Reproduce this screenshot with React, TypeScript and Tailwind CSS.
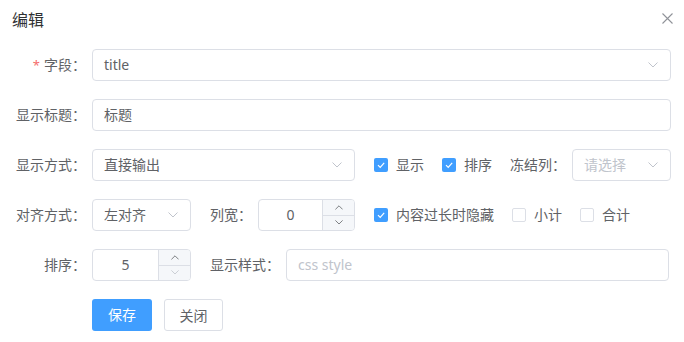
import React from 'react';

const Chevron: React.FC<{ up?: boolean; color?: string; w?: number }> = ({ up, color = '#c0c4cc', w = 10 }) => (
  <svg width={w} height={w * 0.6} viewBox="0 0 10 6" fill="none">
    <path d={up ? 'M0.5 5.5 L5 1 L9.5 5.5' : 'M0.5 0.5 L5 5 L9.5 0.5'} stroke={color} strokeWidth="1" />
  </svg>
);

const Checkbox: React.FC<{ checked?: boolean; label: string; className?: string }> = ({ checked, label, className = '' }) => (
  <div className={`flex items-center shrink-0 whitespace-nowrap ${className}`}>
    {checked ? (
      <span className="w-[14px] h-[14px] rounded-[2px] bg-[#409eff] flex items-center justify-center">
        <svg width="14" height="14" viewBox="0 0 14 14" fill="none">
          <path d="M4 7.2 L6.2 9.4 L10.2 4.8" stroke="#fff" strokeWidth="1.2" />
        </svg>
      </span>
    ) : (
      <span className="w-[14px] h-[14px] rounded-[2px] border border-[#dcdfe6] bg-white" />
    )}
    <span className="ml-2 text-[14px] text-[#606266]">{label}</span>
  </div>
);

const Select: React.FC<{ value?: string; placeholder?: string; className?: string }> = ({ value, placeholder, className = '' }) => (
  <div className={`h-8 shrink-0 border border-[#dcdfe6] rounded-[4px] flex items-center justify-between pl-[11px] pr-[12px] ${className}`}>
    <span className={`text-[14px] whitespace-nowrap ${value ? 'text-[#606266]' : 'text-[#c0c4cc]'}`}>{value || placeholder}</span>
    <Chevron />
  </div>
);

const InputNumber: React.FC<{ value: string; className?: string; downDisabled?: boolean }> = ({ value, className = '', downDisabled }) => (
  <div className={`h-8 shrink-0 border border-[#dcdfe6] rounded-[4px] flex overflow-hidden ${className}`}>
    <div className="flex-1 flex items-center justify-center text-[14px] text-[#606266]">{value}</div>
    <div className="w-[32px] border-l border-[#dcdfe6] bg-[#f5f7fa] flex flex-col">
      <div className="flex-1 flex items-center justify-center border-b border-[#dcdfe6]">
        <Chevron up w={8} color="#606266" />
      </div>
      <div className="flex-1 flex items-center justify-center">
        <Chevron w={8} color={downDisabled ? '#c0c4cc' : '#606266'} />
      </div>
    </div>
  </div>
);

const Label: React.FC<{ text: string; required?: boolean }> = ({ text, required }) => (
  <div className="w-[92px] shrink-0 pr-[6px] flex justify-end items-center text-[14px] text-[#606266] whitespace-nowrap">
    {required && <span className="text-[#f56c6c] mr-1 text-[13px]">*</span>}
    <span>{text}</span>
  </div>
);

export default function App() {
  return (
    <div className="w-[684px] h-[342px] bg-white font-[family-name:'Noto_Sans','Noto_Sans_CJK_SC',sans-serif] text-[#606266] leading-8">
      <div className="h-[49px] flex items-start justify-between pl-3 pr-[11px] pt-[8px]">
        <span className="text-[16px] leading-6 text-[#303133]">编辑</span>
        <svg width="11" height="11" viewBox="0 0 11 11" className="mt-[5px]" fill="none">
          <path d="M0.5 0.5 L10.5 10.5 M10.5 0.5 L0.5 10.5" stroke="#909399" strokeWidth="1.1" />
        </svg>
      </div>

      <div className="flex h-8 mb-[18px]">
        <Label text="字段：" required />
        <Select value="title" className="w-[579px]" />
      </div>

      <div className="flex h-8 mb-[18px]">
        <Label text="显示标题：" />
        <div className="w-[579px] shrink-0 h-8 border border-[#dcdfe6] rounded-[4px] pl-[11px] flex items-center text-[14px]">标题</div>
      </div>

      <div className="flex h-8 mb-[18px] items-center">
        <Label text="显示方式：" />
        <Select value="直接输出" className="w-[263px]" />
        <Checkbox checked label="显示" className="ml-[19px]" />
        <Checkbox checked label="排序" className="ml-[18px]" />
        <span className="ml-[18px] w-[62px] shrink-0 whitespace-nowrap text-[14px]">冻结列：</span>
        <Select placeholder="请选择" className="w-[99px]" />
      </div>

      <div className="flex h-8 mb-[18px] items-center">
        <Label text="对齐方式：" />
        <Select value="左对齐" className="w-[99px]" />
        <span className="ml-[19px] w-[48px] shrink-0 whitespace-nowrap text-[14px]">列宽：</span>
        <InputNumber value="0" className="w-[97px]" />
        <Checkbox checked label="内容过长时隐藏" className="ml-[19px]" />
        <Checkbox label="小计" className="ml-[18px]" />
        <Checkbox label="合计" className="ml-[18px]" />
      </div>

      <div className="flex h-8 mb-[18px] items-center">
        <Label text="排序：" />
        <InputNumber value="5" className="w-[99px]" downDisabled />
        <span className="ml-[19px] w-[76px] shrink-0 whitespace-nowrap text-[14px]">显示样式：</span>
        <div className="w-[383px] shrink-0 h-8 border border-[#dcdfe6] rounded-[4px] pl-[11px] flex items-center text-[14px] text-[#c0c4cc]">css style</div>
      </div>

      <div className="flex h-8 pl-[92px]">
        <button className="w-[60px] h-8 rounded-[3px] bg-[#409eff] text-white text-[14px]">保存</button>
        <button className="ml-3 w-[59px] h-8 rounded-[3px] border border-[#dcdfe6] bg-white text-[#606266] text-[14px]">关闭</button>
      </div>
    </div>
  );
}
